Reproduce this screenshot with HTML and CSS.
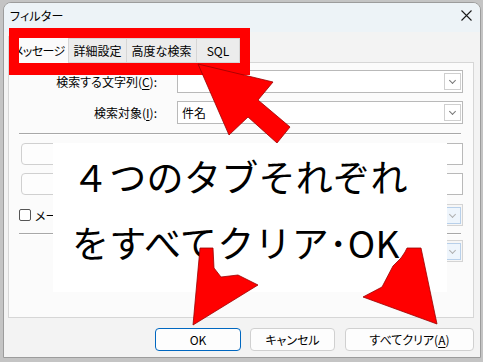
FILE: index.html
```html
<!DOCTYPE html>
<html lang="ja">
<head>
  <meta charset="UTF-8" />
  <title>フィルター</title>
  <link rel="stylesheet" href="styles.css">
</head>
<body>

  <!-- Dialog -->
  <div class="window">
    <div class="titlebar">
      <span class="title">フィルター</span>
      <svg class="close" width="11" height="11" viewBox="0 0 11 11">
        <path d="M0.5 0.5 L10.5 10.5 M10.5 0.5 L0.5 10.5" stroke="#1a1a1a" stroke-width="1.1" fill="none"/>
      </svg>
    </div>

    <div class="content">
      <div class="tabs">
        <div class="tab active t1">メッセージ</div>
        <div class="tab t2">詳細設定</div>
        <div class="tab t3">高度な検索</div>
        <div class="tab t4">SQL</div>
      </div>

      <div class="page">
        <div class="row r1">
          <label>検索する文字列(<u>C</u>):</label>
          <div class="combo"><span></span><i class="drop"></i></div>
        </div>
        <div class="row r2">
          <label>検索対象(<u>I</u>):</label>
          <div class="combo"><span>件名</span><i class="drop"></i></div>
        </div>

        <div class="sep s1"></div>

        <!-- these two buttons sit under the note, their labels never show -->
        <div class="row r3">
          <div class="side"><button class="btn wide"></button></div>
          <div class="field"></div>
        </div>
        <div class="row r4">
          <div class="side"><button class="btn wide"></button></div>
          <div class="field"></div>
        </div>
        <div class="row r5">
          <div class="side"><span class="check"></span>メー</div>
          <div class="combo disabled"><span></span><i class="drop"></i></div>
        </div>

        <div class="sep s2"></div>

        <div class="row r6">
          <div class="side"></div>
          <div class="combo disabled"><span></span><i class="drop"></i></div>
        </div>
      </div>

      <div class="actions">
        <button class="btn ok">OK</button>
        <button class="btn cancel">キャンセル</button>
        <button class="btn clear">すべてクリア(<u>A</u>)</button>
      </div>
    </div>
  </div>

  <!-- Annotations drawn on top -->
  <div class="mark-box"></div>

  <svg class="arrows under" width="483" height="362" viewBox="0 0 483 362">
    <polygon points="198,64 273,82 258,100 290,127 277,143 248,117 229,135" />
  </svg>

  <div class="note">
    <p>４つのタブそれぞれ</p>
    <p>をすべてクリア･OK</p>
  </div>

  <svg class="arrows over" width="483" height="362" viewBox="0 0 483 362">
    <polygon points="200,248 213,248 214,268 221,277 238,275 258,285 193,325" />
    <polygon points="407,248 421,248 437,324 363,297 382,287 393,266 401,258 405,252" />
  </svg>

</body>
</html>
```

FILE: styles.css
```css
* { box-sizing: border-box; margin: 0; padding: 0; }

html, body {
  width: 483px;
  height: 362px;
  overflow: hidden;
}

body {
  position: relative;
  background: #c4c4c4;
  font-family: "Noto Sans CJK JP", sans-serif;
  font-size: 12px;
  color: #000;
}

u { text-decoration: underline; text-underline-offset: 2px; }

/* Dialog window */
.window {
  margin: 2px 0 0 3px;
  width: 478px;
  height: 356px;
  border: 1px solid #9c9c9c;
  border-radius: 8px 8px 0 0;
  background: #f3f3f3;
  overflow: hidden;
}

.titlebar {
  height: 29px;
  padding: 0 8px 5px 6px;
  display: flex;
  align-items: center;
  background: #edf3f7;
}

.title {
  font-feature-settings: "palt";
  letter-spacing: 0.2px;
}

.close { margin-left: auto; }

.content {
  padding: 0 6px 0 4px;
}

/* Tabs */
.tabs {
  display: flex;
  align-items: flex-end;
  height: 30px;
  padding-top: 4px;
  font-feature-settings: "palt";
}

.tab {
  height: 24px;
  display: flex;
  align-items: center;
  justify-content: center;
  white-space: nowrap;
  overflow: hidden;
  background: #ececec;
  border: 1px solid #d6d6d6;
  border-left: none;
  border-bottom: none;
}

.tab.active {
  height: 27px;
  margin-bottom: -1px;
  justify-content: flex-start;
  padding-left: 4px;
  letter-spacing: -0.6px;
  background: #fbfbfb;
  border-left: 1px solid #d6d6d6;
  position: relative;
  z-index: 1;
}

.t1 { width: 61px; }
.t2 { width: 58px; }
.t3 { width: 70px; }
.t4 { width: 43px; }

/* Tab page */
.page {
  height: 256px;
  padding: 7px 10px 0 10px;
  border: 1px solid #d6d6d6;
  background: #fbfbfb;
}

.row {
  display: grid;
  grid-template-columns: 138px 286px;
  column-gap: 20px;
  align-items: center;
}

.row label {
  text-align: right;
  font-feature-settings: "palt";
}

.r1 { height: 23px; }
.r2 { height: 23px; margin-top: 8px; }
.r3 { height: 22px; margin-top: 8px; }
.r4 { height: 22px; margin-top: 8px; }
.r5 { height: 22px; margin-top: 9px; }
.r6 { height: 22px; margin-top: 5px; }

.sep {
  height: 2px;
  margin-right: 2px;
  border-top: 1px solid #a8a8a8;
  border-bottom: 1px solid #fff;
}

.s1 { margin-top: 9px; }
.s2 { margin-top: 7px; }

.combo, .field {
  height: 100%;
  display: flex;
  align-items: center;
  padding-left: 4px;
  background: #fff;
  border: 1px solid #b9b9b9;
}

.combo .drop {
  margin-left: auto;
  margin-right: 1px;
  width: 17px;
  height: 17px;
  border: 1px solid #cfcfcf;
  position: relative;
}

.combo .drop::after {
  content: "";
  position: absolute;
  left: 5px;
  top: 4px;
  width: 4px;
  height: 4px;
  border-right: 1px solid #777;
  border-bottom: 1px solid #777;
  transform: rotate(45deg);
}

.combo.disabled {
  background: #f6f6f6;
  border-color: #d4d4d4;
}

.combo.disabled .drop {
  background: #eef5fc;
  border-color: #b8d0ea;
}

.combo.disabled .drop::after { border-color: #b0b0b0; }

.side {
  display: flex;
  align-items: center;
  height: 100%;
  font-feature-settings: "palt";
}

.check {
  width: 12px;
  height: 12px;
  margin-right: 4px;
  border: 1px solid #555;
  border-radius: 2px;
  background: #fff;
}

/* Buttons */
.btn {
  height: 23px;
  font-family: inherit;
  font-size: 12px;
  font-feature-settings: "palt";
  color: #000;
  background: #fdfdfd;
  border: 1px solid #d0d0d0;
  border-radius: 4px;
}

.btn.wide {
  width: 130px;
  height: 22px;
  margin-left: 2px;
}

.actions {
  display: flex;
  justify-content: flex-end;
  margin-top: 10px;
}

.ok {
  width: 86px;
  border: 1px solid #0067c0;
}
.cancel { width: 85px; margin-left: 9px; }
.clear { width: 129px; margin-left: 10px; }

/* Annotations */
.mark-box {
  position: absolute;
  z-index: 10;
  left: 9px;
  top: 28px;
  width: 241px;
  height: 47px;
  border: solid #ff0000;
  border-width: 10px 10px 12px 10px;
}

.arrows {
  position: absolute;
  left: 0;
  top: 0;
}

.arrows.under { z-index: 11; }
.arrows.over { z-index: 13; }

.arrows polygon {
  fill: #ff0000;
  stroke: #9a0000;
  stroke-width: 0.8;
}

.note {
  position: absolute;
  z-index: 12;
  left: 53px;
  top: 143px;
  width: 394px;
  height: 149px;
  padding: 0 0 0 19px;
  background: #fff;
  font-size: 37px;
  letter-spacing: 0.3px;
  line-height: 66px;
  white-space: nowrap;
}
```
